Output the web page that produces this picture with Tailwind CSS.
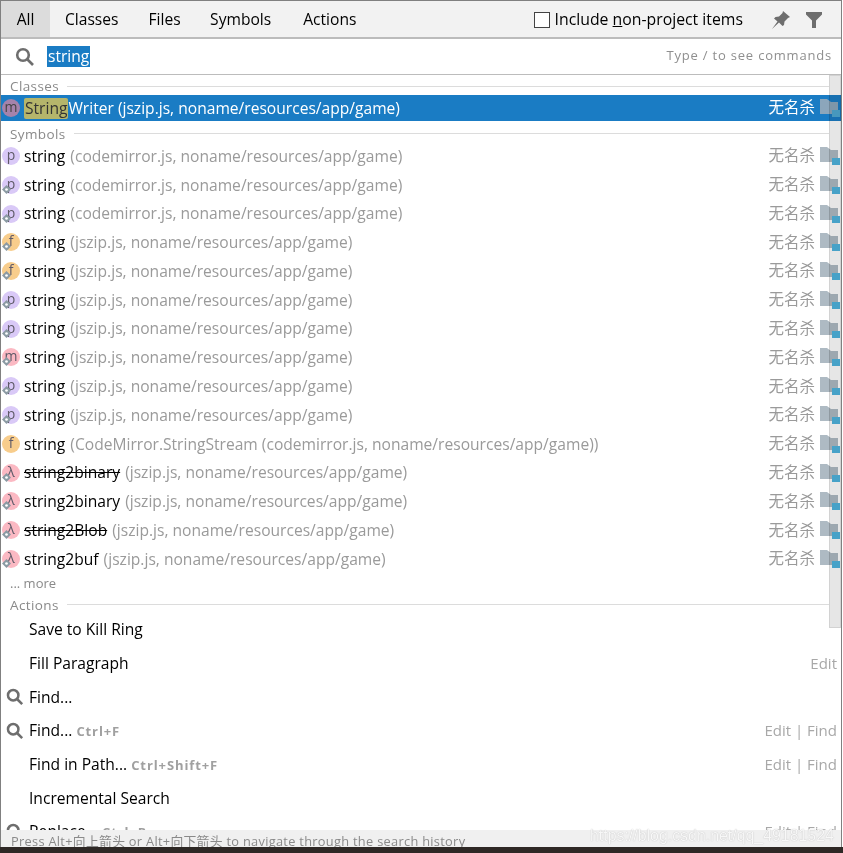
<!DOCTYPE html>
<html lang="en">
<head>
  <meta charset="UTF-8" />
  <title>Search Everywhere</title>
  <script src="https://cdn.jsdelivr.net/npm/@tailwindcss/browser@4"></script>
</head>
<body class="bg-white font-['Open_Sans','Noto_Sans_CJK_SC',sans-serif] text-[15.6px] text-black">
  <div class="relative w-[843px] h-[853px] overflow-hidden">
    <div class="flex flex-col w-[842px] h-[847px] border-l border-t border-r border-[#808080] overflow-hidden">

      <!-- tabs -->
      <div class="flex items-center h-[36px] shrink-0 bg-[#f2f2f2]">
        <div class="flex items-center justify-center w-[49px] h-[36px] pt-[2px] bg-[#dcdcdc]">All</div>
        <div class="ml-[15px] mt-[2px]">Classes</div>
        <div class="ml-[30px] mt-[2px]">Files</div>
        <div class="ml-[29.500px] mt-[2px]">Symbols</div>
        <div class="ml-[32px] mt-[2px]">Actions</div>
        <div class="ml-auto mt-[2px] flex items-center">
          <div class="w-[16px] h-[16px] border border-[#444] bg-white"></div>
          <div class="ml-[5px] text-[15.800px]">Include <span class="underline">n</span>on-project items</div>
          <svg class="ml-[28px] w-[19px] h-[18px]" viewBox="0 0 19 18" fill="#6e6e6e"><path d="M12 0l7 6-2 1-3.500 3.500-.5 3.500-1.500 1-3.500-3.500L1 18l5.500-7.500L3 7.500 4.500 6 8 5.500 11.500 2z"/></svg>
          <svg class="ml-[16px] mr-[19px] w-[16px] h-[16px]" viewBox="0 0 16 16" fill="#6e6e6e"><path d="M0 0h16v2.500L10 8.500V16H6V8.500L0 2.500z"/></svg>
        </div>
      </div>

      <!-- search -->
      <div class="flex items-center h-[38px] shrink-0 border-t-2 border-b border-t-[#bcbcbc] border-b-[#bcbcbc]">
        <svg class="ml-[14px] w-[20px] h-[20px]" viewBox="0 0 20 20" fill="none" stroke="#6e6e6e" stroke-width="2.600"><circle cx="8" cy="8" r="5.800"/><path d="M12.500 12.500L18 18"/></svg>
        <span class="ml-[12px] bg-[#1a7cc4] text-white leading-[21px] px-[1px]">string</span>
        <span class="ml-auto mr-[9px] pb-[1px] text-[13px] tracking-[0.8px] text-[#8f8f8f]">Type / to see commands</span>
      </div>

      <div id="list" class="relative flex-1 overflow-hidden">
        <!-- scrollbar -->
        <div class="absolute right-0 top-0 w-[12px] h-[553px] bg-[#e6e6e6] border border-[#d2d2d2] mix-blend-multiply z-10"></div>
      </div>

      <!-- status -->
      <div class="h-[17px] shrink-0 bg-[#f0f0f0] text-[12.800px] leading-[22px] pl-[10px] tracking-[0.3px] text-[#8a8a8a] z-20 overflow-hidden">Press Alt+向上箭头 or Alt+向下箭头 to navigate through the search history</div>
    </div>
    <div class="h-[6px] bg-[#2e2825]"></div>
    <div class="absolute left-[590px] top-[824px] font-['Liberation_Sans',sans-serif] text-[15.900px] text-white/90 [text-shadow:0_0_1px_#aaa] z-30">https://blog.csdn.net/qq_49181524</div>
  </div>

  <script>
    const path = "noname/resources/app/game";
    const colors = {
      p: "bg-[#d9c9f7]",
      f: "bg-[#f8cd8c]",
      m: "bg-[#fbb9c3]",
      l: "bg-[#fbb9c3]"
    };
    const symbols = [
      ["p", 0, "string", "(codemirror.js, " + path + ")", 0],
      ["p", 1, "string", "(codemirror.js, " + path + ")", 0],
      ["p", 1, "string", "(codemirror.js, " + path + ")", 0],
      ["f", 1, "string", "(jszip.js, " + path + ")", 0],
      ["f", 1, "string", "(jszip.js, " + path + ")", 0],
      ["p", 1, "string", "(jszip.js, " + path + ")", 0],
      ["p", 1, "string", "(jszip.js, " + path + ")", 0],
      ["m", 1, "string", "(jszip.js, " + path + ")", 0],
      ["p", 1, "string", "(jszip.js, " + path + ")", 0],
      ["p", 1, "string", "(jszip.js, " + path + ")", 0],
      ["f", 0, "string", "(CodeMirror.StringStream (codemirror.js, " + path + "))", 0],
      ["l", 1, "string2binary", "(jszip.js, " + path + ")", 1],
      ["l", 1, "string2binary", "(jszip.js, " + path + ")", 0],
      ["l", 1, "string2Blob", "(jszip.js, " + path + ")", 1],
      ["l", 1, "string2buf", "(jszip.js, " + path + ")", 0]
    ];
    const actions = [
      ["Save to Kill Ring", "", "", 0],
      ["Fill Paragraph", "", "Edit", 0],
      ["Find...", "", "", 1],
      ["Find...", "Ctrl+F", "Edit | Find", 1],
      ["Find in Path...", "Ctrl+Shift+F", "Edit | Find", 0],
      ["Incremental Search", "", "", 0],
      ["Replace...", "Ctrl+R", "Edit | Find", 1]
    ];

    const gear = `<svg class="absolute left-0 top-[9px] w-[9px] h-[9px]" viewBox="0 0 10 10"><path d="M5 0l5 5-5 5-5-5z" fill="#8b9aa3"/><circle cx="5" cy="5" r="1.500" fill="#fff"/></svg>`;
    const badge = (kind, withGear) => `
      <div class="relative w-[18px] h-[18px] shrink-0 rounded-full flex items-center justify-center text-[14px] leading-none text-[#5f5a68] pb-[2px] ${colors[kind]}">${kind === "l" ? "λ" : kind}${withGear ? gear : ""}</div>`;
    const folder = `
      <svg class="ml-[5px] w-[20px] h-[18px] shrink-0" viewBox="0 0 20 18"><path d="M0 0h7l4 3h7v12H0z" fill="#aebac3"/><rect x="12" y="11" width="8" height="7" fill="#4eb4de"/></svg>`;
    const selectedFolder = `
      <svg class="ml-[5px] w-[20px] h-[18px] shrink-0" viewBox="0 0 20 18"><path d="M0 0h7l4 3h7v12H0z" fill="#8ca6bb"/><rect x="12" y="11" width="8" height="7" fill="#4ea9d2"/></svg>`;
    const head = (label, cls) => `
      <div class="flex items-center pl-[9px] text-[13.500px] text-[#8a8a8a] tracking-[0.4px] ${cls}">
        <span>${label}</span><span class="flex-1 h-px bg-[#dcdcdc] ml-[8px] mr-[12px]"></span>
      </div>`;

    let html = head("Classes", "h-[20px] pt-[2px]");
    html += `
      <div class="flex items-center h-[26px] bg-[#1a7cc4] text-white pl-[1px] pr-[1px]">
        <div class="w-[18px] h-[18px] shrink-0 rounded-full flex items-center justify-center text-[14px] leading-none text-[#444] pb-[2px] bg-[#a583ab]">m</div>
        <span class="ml-[4px] mt-[1px] px-[1px] rounded-[2px] bg-[#b5b56b] text-[#333] leading-[21px]">String</span><span class="mt-[1px]">Writer (jszip.js, ${path})</span>
        <span class="ml-auto text-[15.500px]">无名杀</span>${selectedFolder}
      </div>`;
    html += head("Symbols", "h-[20.600px] pt-[5px]");
    symbols.forEach(([kind, withGear, name, loc, struck]) => {
      html += `
      <div class="flex items-center h-[28.790px] pl-[1px] pr-[1px]">
        ${badge(kind, withGear)}
        <span class="ml-[4px] mt-[1px] ${struck ? "line-through" : ""}">${name}</span>
        <span class="ml-[5px] mt-[1px] text-[#9a9a9a]">${loc}</span>
        <span class="ml-auto text-[15.500px] text-[#9a9a9a]">无名杀</span>${folder}
      </div>`;
    });
    html += `<div class="h-[20px] leading-[20px] pl-[9px] text-[13px] text-[#8a8a8a]">... more</div>`;
    html += head("Actions", "h-[20px] pt-[3px]");
    actions.forEach(([name, keys, where, search]) => {
      html += `
      <div class="flex items-center h-[33.670px] pr-[4px]">
        <div class="w-[28px] shrink-0 flex justify-center">${search ? '<svg class="w-[18px] h-[18px]" viewBox="0 0 20 20" fill="none" stroke="#6e6e6e" stroke-width="2.800"><circle cx="8" cy="8" r="5.800"/><path d="M12.500 12.500L18 18"/></svg>' : ""}</div>
        <span>${name}</span>
        <span class="ml-[4px] pt-[2px] text-[13px] font-bold tracking-[0.9px] text-[#a0a0a0]">${keys}</span>
        <span class="ml-auto mb-[2px] text-[15px] text-[#a8a8a8]">${where}</span>
      </div>`;
    });
    document.getElementById("list").insertAdjacentHTML("beforeend", html);
  </script>
</body>
</html>
